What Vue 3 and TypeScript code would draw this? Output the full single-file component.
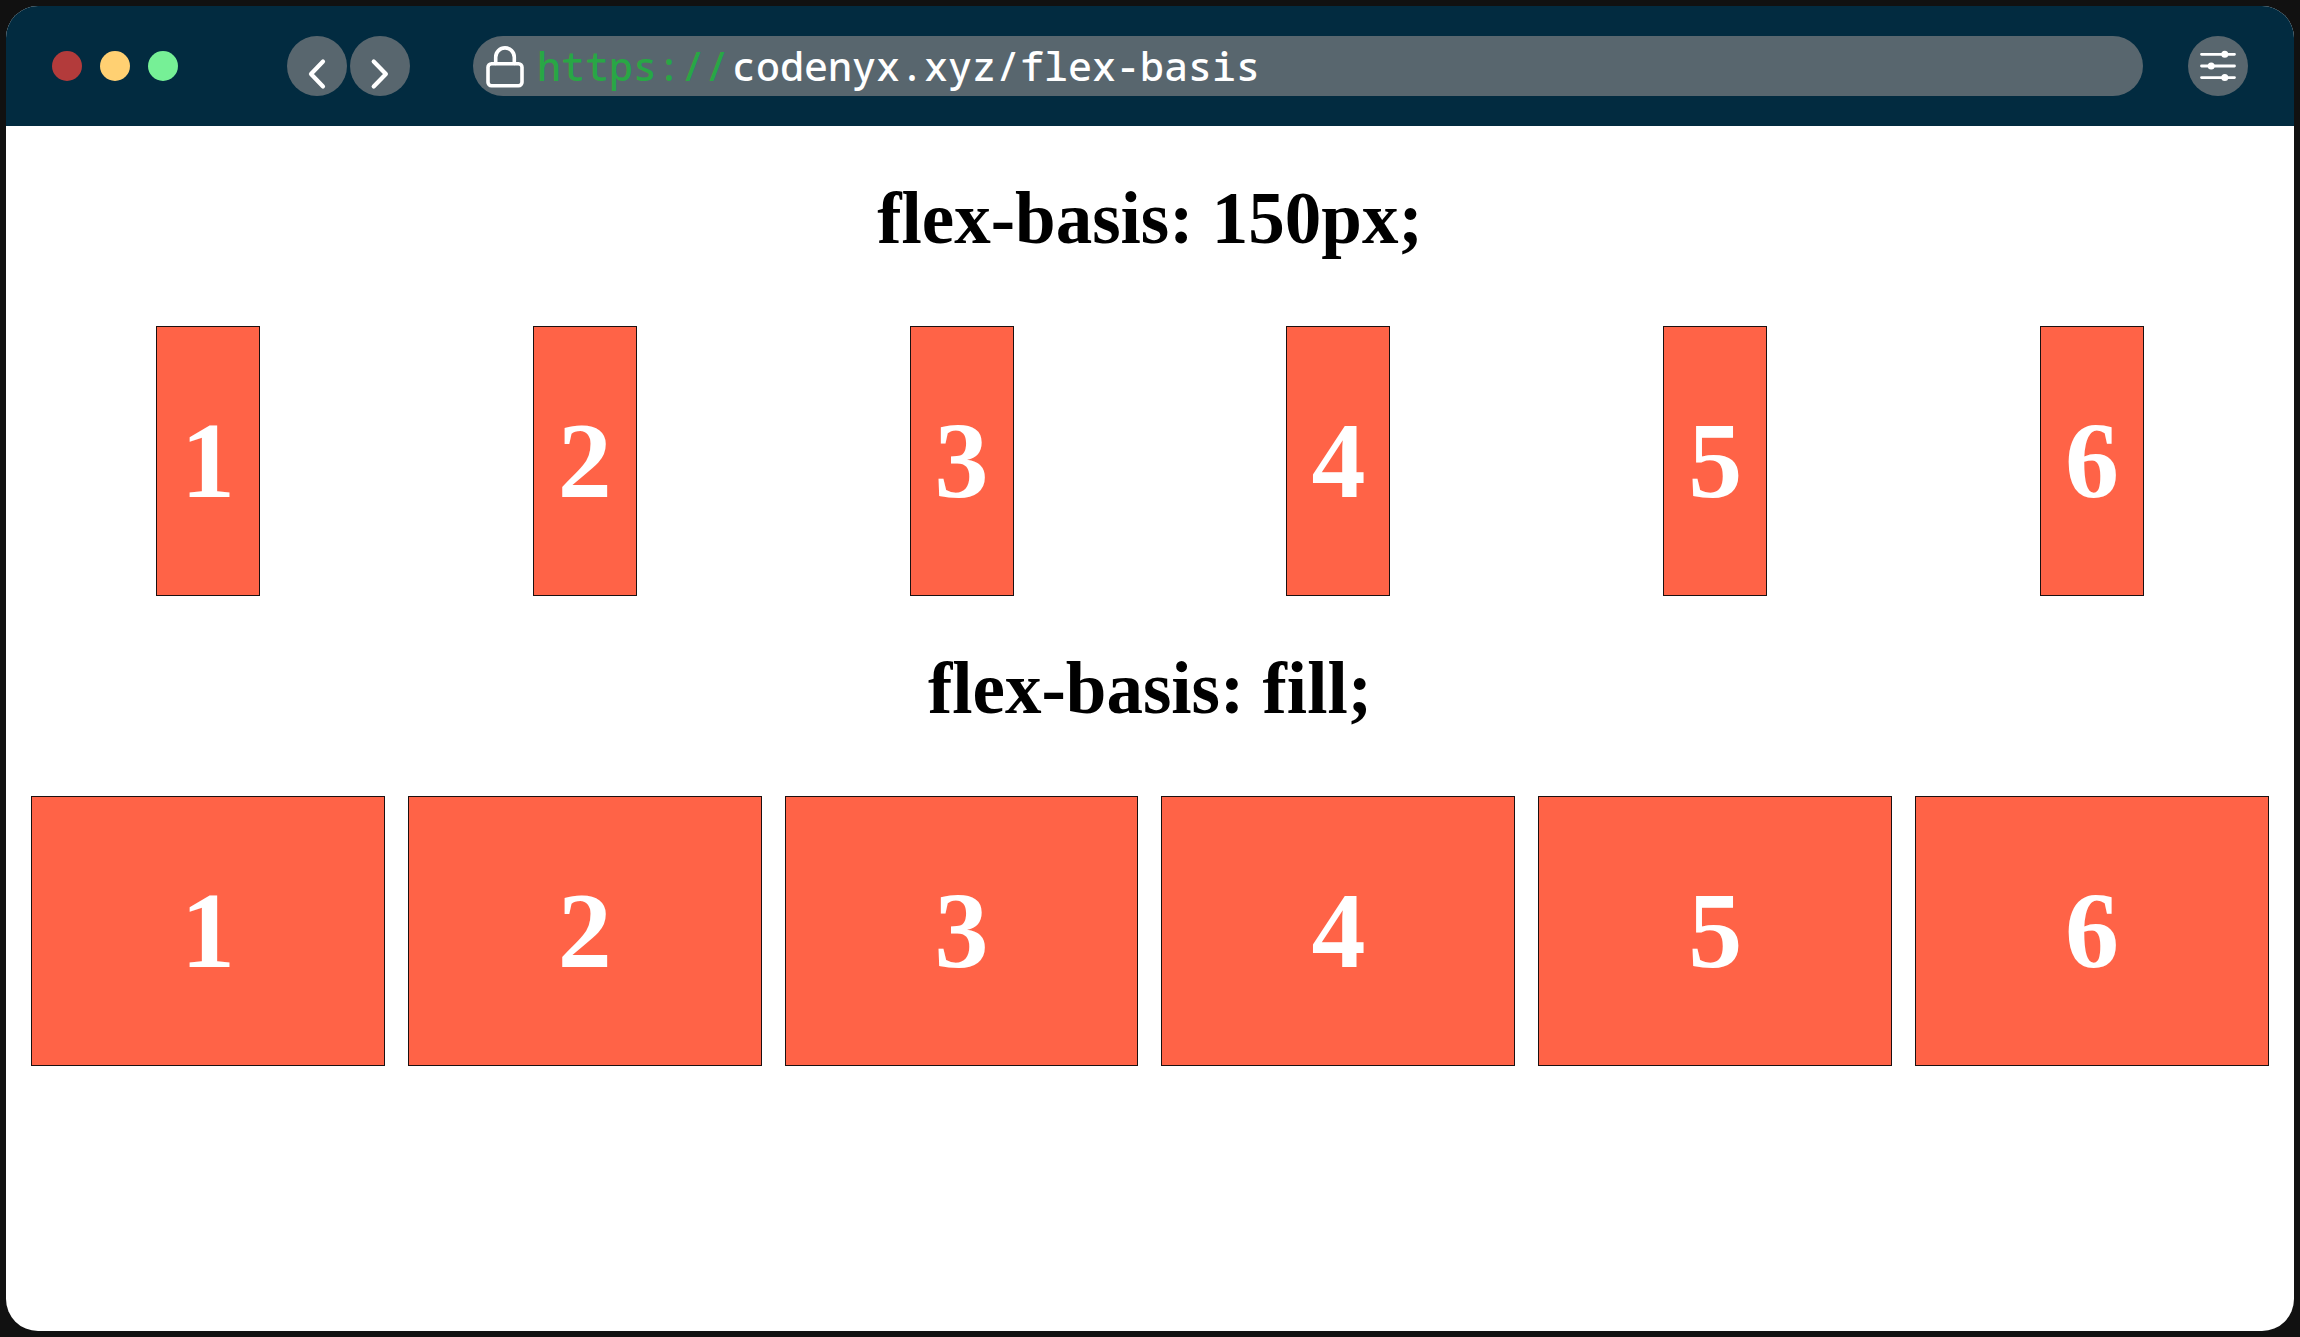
<script setup lang="ts">
import { ref } from 'vue'

interface Demo {
  title: string
  kind: 'fixed' | 'fill'
}

const address = ref('codenyx.xyz/flex-basis')
const items: number[] = [1, 2, 3, 4, 5, 6]
const demos: Demo[] = [
  { title: 'flex-basis: 150px;', kind: 'fixed' },
  { title: 'flex-basis: fill;', kind: 'fill' },
]
</script>

<template>
  <div class="window">
    <header class="toolbar">
      <div class="lights">
        <button class="light close" type="button" aria-label="Close"></button>
        <button class="light minimize" type="button" aria-label="Minimize"></button>
        <button class="light maximize" type="button" aria-label="Maximize"></button>
      </div>
      <nav class="history">
        <button class="round" type="button" aria-label="Back">
          <svg viewBox="0 0 60 60"><path d="M36 25.5 24 38l12 12.5" stroke-width="4.2" /></svg>
        </button>
        <button class="round" type="button" aria-label="Forward">
          <svg viewBox="0 0 60 60"><path d="M23.7 25.5 35.9 38 23.7 50.5" stroke-width="4.2" /></svg>
        </button>
      </nav>
      <div class="address">
        <svg class="lock" viewBox="0 0 40 44" aria-hidden="true">
          <rect x="3" y="19.7" width="34" height="22" rx="3.5" stroke-width="3.6" />
          <path d="M10.7 19.5V13.2a9.3 9.3 0 0 1 18.6 0v6.3" stroke-width="3.6" />
        </svg>
        <label class="scheme" for="address">https://</label>
        <input id="address" v-model="address" class="url" type="text" spellcheck="false" />
      </div>
      <button class="round" type="button" aria-label="Settings">
        <svg viewBox="0 0 60 60">
          <path d="M13.5 18.3h33M13.5 30h33M13.5 41.6h33" stroke-width="2.8" />
          <g class="knobs">
            <circle cx="36.8" cy="18.3" r="3.5" />
            <circle cx="23.2" cy="30" r="3.5" />
            <circle cx="36.8" cy="41.6" r="3.5" />
          </g>
        </svg>
      </button>
    </header>
    <main class="page">
      <section v-for="demo in demos" :key="demo.kind">
        <h2>{{ demo.title }}</h2>
        <div class="row" :class="demo.kind">
          <div v-for="n in items" :key="n" class="cell">
            <div class="box">{{ n }}</div>
          </div>
        </div>
      </section>
    </main>
  </div>
</template>

<style>
body {
  background: #111;
}
</style>

<style scoped>
* {
  box-sizing: border-box;
}
.window {
  display: flex;
  flex-direction: column;
  min-height: calc(100vh - 12px);
  margin: 6px;
  border-radius: 32px;
  overflow: hidden;
  background: #fff;
}
.toolbar {
  display: flex;
  align-items: center;
  height: 120px;
  padding: 0 46px;
  background: #022b40;
}
button {
  padding: 0;
  border: 0;
  border-radius: 50%;
}
.lights {
  display: flex;
  gap: 18px;
  margin-right: 109px;
}
.light {
  width: 30px;
  height: 30px;
}
.close {
  background: #b33b3b;
}
.minimize {
  background: #ffd072;
}
.maximize {
  background: #76f096;
}
.history {
  display: flex;
  gap: 3px;
  margin-right: 63px;
}
.round {
  flex: none;
  width: 60px;
  height: 60px;
  background: #58666e;
}
svg {
  display: block;
  fill: none;
  stroke: #fff;
  stroke-linecap: round;
  stroke-linejoin: round;
}
.knobs {
  fill: #fff;
  stroke: none;
}
.address {
  display: flex;
  flex: 1;
  align-items: center;
  min-width: 0;
  height: 60px;
  margin-right: 45px;
  padding: 0 30px 0 12px;
  border-radius: 30px;
  background: #58666e;
  font: 500 40px/60px "Noto Sans Mono", "DejaVu Sans Mono", monospace;
}
.lock {
  flex: none;
  width: 40px;
  height: 44px;
  margin-right: 12px;
}
.scheme {
  padding-right: 3px;
  color: #28a745;
}
.url {
  flex: 1;
  min-width: 0;
  height: 60px;
  padding: 0;
  border: 0;
  outline: 0;
  background: none;
  color: #fff;
  font: inherit;
}
.page {
  flex: 1;
  padding: 0 25px;
  font-family: "Liberation Serif", "Times New Roman", serif;
}
h2 {
  margin: 0;
  padding: 51px 0 65px;
  color: #000;
  font-size: 73px;
  line-height: 84px;
  text-align: center;
}
.row {
  display: flex;
  gap: 23px;
}
.cell {
  display: flex;
  flex: 1;
  justify-content: center;
}
.box {
  display: flex;
  align-items: center;
  justify-content: center;
  height: 270px;
  border: 1px solid #1c1010;
  background: #ff6347;
  color: #fff;
  font-size: 108px;
  font-weight: bold;
}
.fixed .box {
  flex: 0 0 104px;
}
.fill .box {
  flex: 1;
}
</style>
